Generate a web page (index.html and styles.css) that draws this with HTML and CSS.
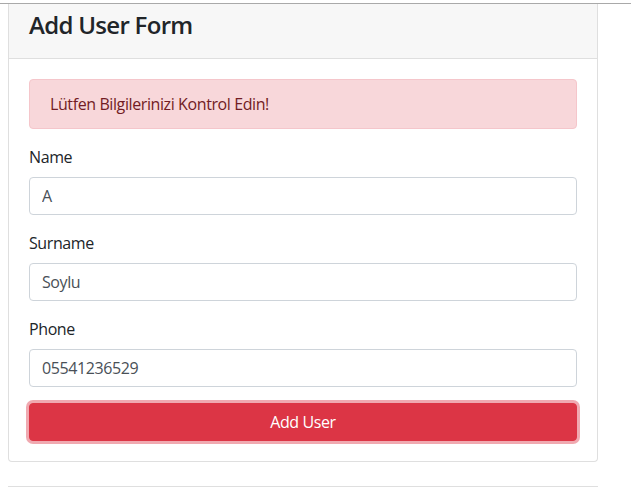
FILE: index.html
```html
<!DOCTYPE html>
<html lang="tr">
<head>
<meta charset="utf-8">
<title>Add User Form</title>
<link rel="stylesheet" href="styles.css">
</head>
<body>
<div class="topline"></div>
<div class="page">
  <div class="card">
    <div class="card-header">
      <h3 class="card-title">Add User Form</h3>
    </div>
    <div class="card-body">
      <div class="alert">Lütfen Bilgilerinizi Kontrol Edin!</div>
      <form class="form">
        <div class="form-group">
          <label class="label" for="name">Name</label>
          <input class="input" id="name" type="text" value="A">
        </div>
        <div class="form-group">
          <label class="label" for="surname">Surname</label>
          <input class="input" id="surname" type="text" value="Soylu">
        </div>
        <div class="form-group">
          <label class="label" for="phone">Phone</label>
          <input class="input" id="phone" type="text" value="05541236529">
        </div>
        <button class="btn" type="button">Add User</button>
      </form>
    </div>
  </div>
  <div class="next-card"></div>
</div>
</body>
</html>
```
FILE: styles.css
```css
* { box-sizing: border-box; }
html, body { margin: 0; padding: 0; background: #fff; }
body {
  font-family: "Segoe UI", "Open Sans", "Noto Sans", sans-serif;
  font-size: 16px;
  line-height: 24px;
  letter-spacing: -0.4px;
  color: #212529;
}
.topline {
  height: 4px;
  border-bottom: 1px solid #a9a9a9;
}
.page {
  padding-left: 8px;
  width: 598px;
}
.card {
  border: 1px solid #dfdfdf;
  border-top: none;
  border-radius: 0 0 4px 4px;
  background: #fff;
}
.card-header {
  background: #f7f7f7;
  padding: 6px 20px 18px 20px;
  border-bottom: 1px solid #dfdfdf;
}
.card-title {
  margin: 0;
  font-size: 24px;
  line-height: 30px;
  font-weight: 600;
  letter-spacing: -0.7px;
  color: #212529;
}
.card-body { padding: 20px; }
.alert {
  background: #f8d7da;
  border: 1px solid #f5c6cb;
  color: #721c24;
  border-radius: 4px;
  padding: 12px 20px;
  margin-bottom: 16px;
}
.form { margin: 0; }
.form-group { margin-bottom: 16px; }
.label {
  display: block;
  margin-bottom: 8px;
}
.input {
  display: block;
  width: 100%;
  height: 38px;
  padding: 6px 12px;
  font: inherit;
  letter-spacing: inherit;
  color: #495057;
  background: #fff;
  border: 1px solid #ced4da;
  border-radius: 4px;
}
.btn {
  display: block;
  width: 100%;
  height: 38px;
  font: inherit;
  letter-spacing: inherit;
  color: #fff;
  background: #dc3545;
  border: 1px solid #dc3545;
  border-radius: 4px;
  box-shadow: 0 0 0 3px rgba(225, 83, 97, 0.5);
  padding: 6px 12px;
}
.next-card {
  margin-top: 24px;
  height: 1px;
  border-top: 1px solid #dfdfdf;
}
```
